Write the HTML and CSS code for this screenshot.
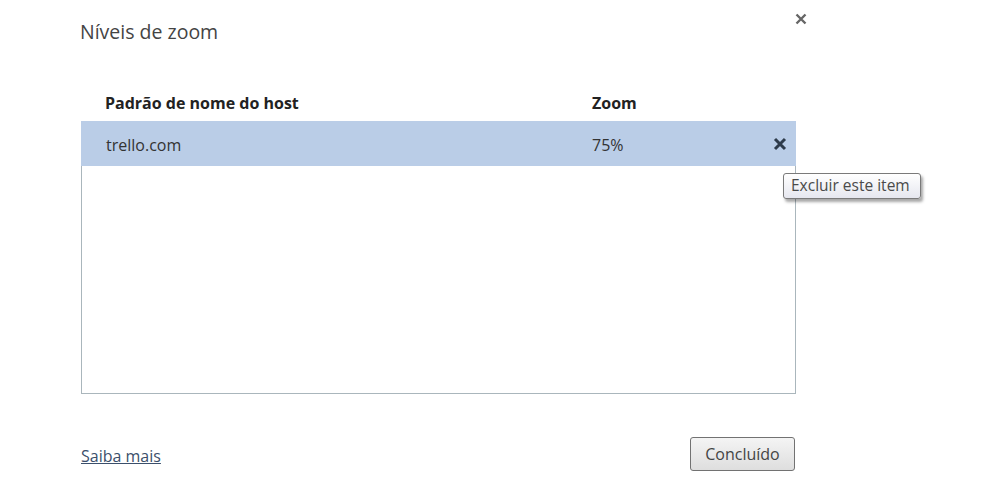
FILE: index.html
```html
<!DOCTYPE html>
<html lang="pt">
<head>
<meta charset="utf-8">
<title>Níveis de zoom</title>
<link rel="stylesheet" href="styles.css">
</head>
<body>
<div class="dialog">
  <div class="titlebar">
    <h1 class="title">Níveis de zoom</h1>
    <button class="close" aria-label="Fechar">
      <svg width="12" height="12" viewBox="0 0 12 12"><path d="M1.5 1.5 L10.5 10.5 M10.5 1.5 L1.5 10.5" stroke="#666666" stroke-width="2.4" stroke-linecap="butt"/></svg>
    </button>
  </div>
  <div class="cols">
    <div class="col-host">Padrão de nome do host</div>
    <div class="col-zoom">Zoom</div>
  </div>
  <div class="list">
    <div class="row selected">
      <div class="cell-host">trello.com</div>
      <div class="cell-zoom">75%</div>
      <button class="remove" aria-label="Excluir este item">
        <svg width="14" height="14" viewBox="0 0 14 14"><path d="M2 2 L12 12 M12 2 L2 12" stroke="#2e3b4b" stroke-width="3"/></svg>
      </button>
    </div>
    <div class="tooltip">Excluir este item</div>
  </div>
  <div class="footer">
    <a class="link" href="#">Saiba mais</a>
    <button class="done">Concluído</button>
  </div>
</div>
</body>
</html>
```
FILE: styles.css
```css
html, body {
  margin: 0;
  padding: 0;
  background: #ffffff;
}
body {
  font-family: "Open Sans", "Noto Sans", "Liberation Sans", sans-serif;
  color: #333;
  width: 984px;
  height: 491px;
  overflow: hidden;
}
.dialog {
  display: flex;
  flex-direction: column;
  padding: 0 188px 0 81px;
}
.titlebar {
  display: flex;
  justify-content: space-between;
  align-items: flex-start;
  height: 92px;
}
.title {
  margin: 19px 0 0 -1px;
  font-size: 19.5px;
  font-weight: 400;
  line-height: 26px;
  color: #444;
}
.close {
  margin: 13px -11px 0 0;
  padding: 0;
  border: 0;
  background: none;
  width: 12px;
  height: 12px;
  display: block;
}
.close svg { display: block; }
.cols {
  display: grid;
  grid-template-columns: 487px 1fr;
  padding-left: 24px;
  font-size: 16px;
  font-weight: 700;
  line-height: 22px;
  color: #222;
  height: 29px;
}
.list {
  position: relative;
  height: 271px;
  border: 1px solid #aab6bc;
  border-top-color: #c8d3da;
}
.row {
  display: grid;
  grid-template-columns: 486px 1fr auto;
  align-items: center;
  height: 45px;
  padding: 0 8px 0 24px;
  font-size: 16px;
  color: #333;
}
.row.selected {
  background: #bacde7;
  margin: -1px -1px 0 -1px;
  padding-left: 25px;
  padding-right: 9px;
  padding-top: 3px;
  height: 42px;
}
.row.selected .remove { margin-top: -3px; }
.remove {
  border: 0;
  background: none;
  padding: 0;
  width: 14px;
  height: 14px;
}
.remove svg { display: block; }
.tooltip {
  position: absolute;
  left: 701px;
  top: 51px;
  width: 122px;
  padding: 2px 7px 3px 7px;
  font-size: 15.5px;
  line-height: 19px;
  color: #4a4a4a;
  white-space: nowrap;
  border: 1px solid #7a7a7a;
  border-radius: 3px;
  background: linear-gradient(#ffffff, #e6e7ef);
  box-shadow: 2px 3px 3px rgba(0,0,0,0.35);
}
.footer {
  display: flex;
  justify-content: space-between;
  align-items: center;
  margin-top: 43px;
}
.link {
  font-size: 16px;
  line-height: 22px;
  margin-top: 3px;
  color: #3b4f6b;
  text-decoration: underline;
}
.done {
  width: 105px;
  height: 34px;
  font-family: inherit;
  font-size: 16px;
  color: #444;
  border: 1px solid #727272;
  border-radius: 3px;
  background: linear-gradient(#f4f4f4, #dedede);
  margin-right: 1px;
  padding: 0 0 1px 0;
}
```
